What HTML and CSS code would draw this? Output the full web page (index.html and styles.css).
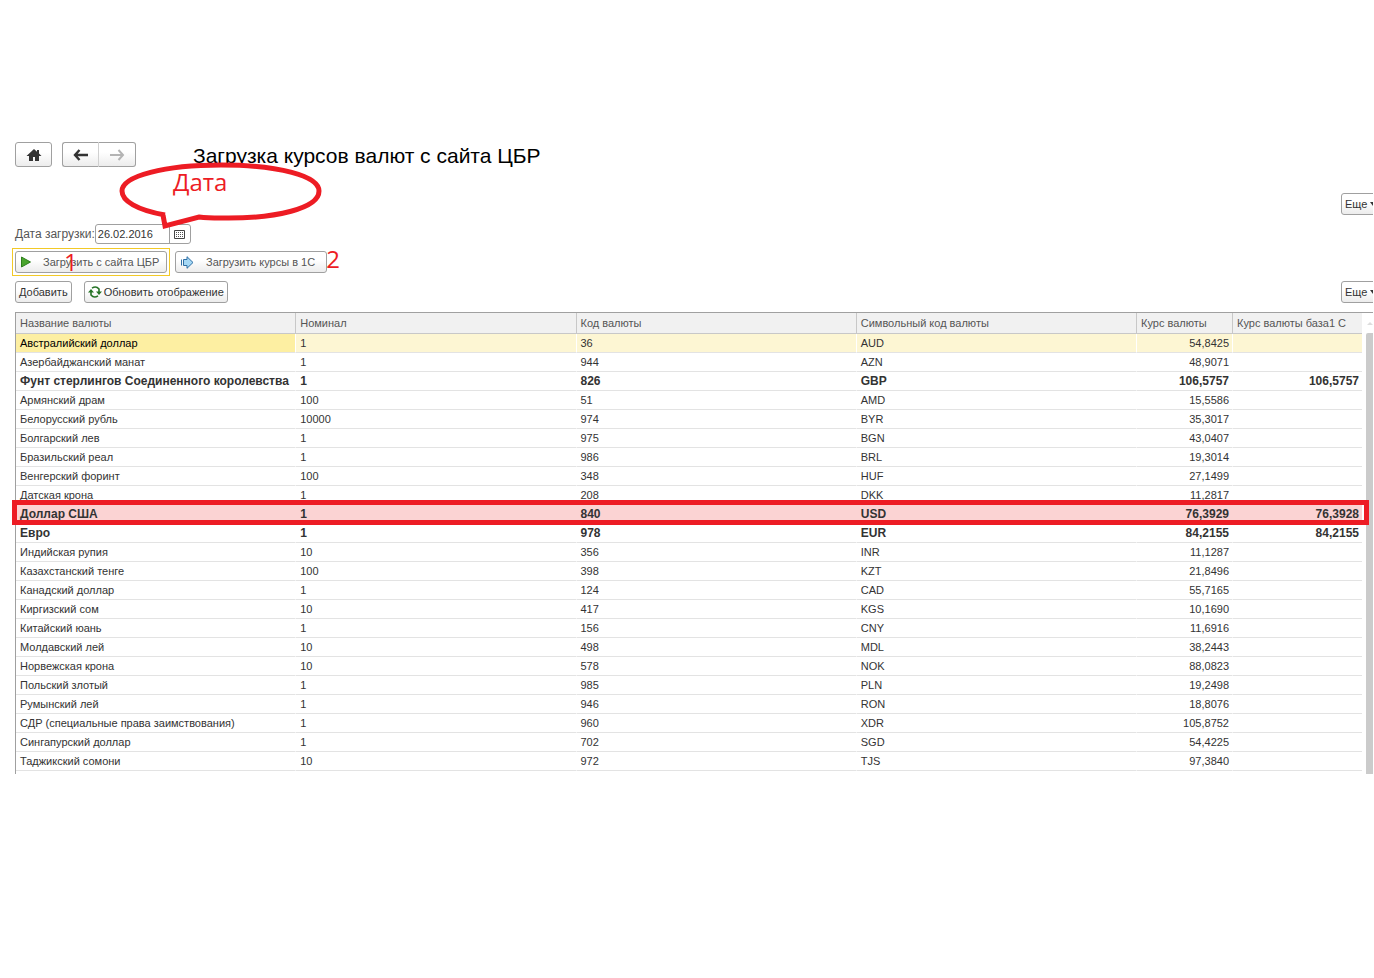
FILE: index.html
```html
<!DOCTYPE html>
<html lang="ru">
<head>
<meta charset="utf-8">
<title>Загрузка курсов валют с сайта ЦБР</title>
<link rel="stylesheet" href="styles.css">
</head>
<body>
<main class="page">
  <header class="topbar">
    <button class="btn btn-home" type="button" aria-label="Домой">
      <svg width="16" height="14" viewBox="0 0 16 14"><path d="M8 1 0.500 8H3v5h4V9h2v4h4V8h2.500L13 5.600V2h-2v1.800z" fill="#333"/></svg>
    </button>
    <div class="nav">
      <button class="btn nav-back" type="button" aria-label="Назад">
        <svg width="16" height="12" viewBox="0 0 16 12"><path d="M6.500 1 2 6l4.500 5M2 6h13" fill="none" stroke="#333" stroke-width="2.400"/></svg>
      </button>
      <button class="btn nav-forward" type="button" aria-label="Вперед" disabled>
        <svg width="16" height="12" viewBox="0 0 16 12"><path d="M9.500 1 14 6l-4.500 5M14 6H1" fill="none" stroke="#b4b4b4" stroke-width="2"/></svg>
      </button>
    </div>
    <h1 class="title">Загрузка курсов валют с сайта ЦБР</h1>
  </header>

  <div class="more-row"><button class="btn btn-more" type="button">Еще <span class="caret"></span></button></div>

  <div class="date-row">
    <label for="date">Дата загрузки:</label>
    <div class="date-field">
      <input id="date" type="text" value="26.02.2016">
      <button class="date-pick" type="button" aria-label="Выбрать дату">
        <svg width="11" height="9" viewBox="0 0 11 9"><path d="M.5.5h10v8H.5z" fill="#fff" stroke="#444"/><path d="M2 2.500h8M2 4.500h8M2 6.500h8" stroke="#555" stroke-dasharray="1 1"/></svg>
      </button>
    </div>
    <svg class="callout" width="204" height="68" viewBox="0 0 204 68"><path d="M46 53C18 48 3 39 3 29C3 14 46 3 102 3C160 3 200 14 200 29C200 46 158 57 102 56Q88 56 80 55L46 64L44 53" fill="none" stroke="#ed1c24" stroke-width="5"/></svg>
    <span class="note note-date">Дата</span>
  </div>

  <div class="load-row">
    <div class="step focus">
      <button class="btn btn-load" type="button">
        <svg width="10" height="12" viewBox="0 0 10 12"><path d="M.5 1 9.500 6 .5 11z" fill="#4aa52e" stroke="#2f7f1e"/></svg>
        <span>Загрузить с сайта ЦБР</span>
      </button>
      <span class="note note-one">1</span>
    </div>
    <div class="step">
      <button class="btn btn-send" type="button">
        <svg width="13" height="13" viewBox="0 0 13 13"><path d="M2.500 3.500H6V.7L12 6.500 6 12.300V9.500H2.500zM.5 3.500v6" fill="#a5d8f5" stroke="#2f6fa5"/></svg>
        <span>Загрузить курсы в 1С</span>
      </button>
      <span class="note note-two">2</span>
    </div>
  </div>

  <div class="tools-row">
    <button class="btn btn-add" type="button">Добавить</button>
    <button class="btn btn-refresh" type="button">
      <svg width="14" height="12" viewBox="0 0 14 12"><path d="M4 2.200Q8-.5 11 3v3M10 9.800Q6 12.500 3 9V6" fill="none" stroke="#267326" stroke-width="1.600"/><path d="M8 5.500h6L11 9zM0 6.500h6L3 3z" fill="#267326"/></svg>
      <span>Обновить отображение</span>
    </button>
    <button class="btn btn-more" type="button">Еще <span class="caret"></span></button>
  </div>

  <div class="grid">
    <table class="rates">
      <colgroup><col><col><col><col><col class="col-rate"><col class="col-base"></colgroup>
      <thead>
        <tr><th>Название валюты</th><th>Номинал</th><th>Код валюты</th><th>Символьный код валюты</th><th>Курс валюты</th><th>Курс валюты база1 С</th></tr>
      </thead>
      <tbody>
        <tr class="selected"><td>Австралийский доллар</td><td>1</td><td>36</td><td>AUD</td><td>54,8425</td><td></td></tr>
        <tr><td>Азербайджанский манат</td><td>1</td><td>944</td><td>AZN</td><td>48,9071</td><td></td></tr>
        <tr class="main"><td>Фунт стерлингов Соединенного королевства</td><td>1</td><td>826</td><td>GBP</td><td>106,5757</td><td>106,5757</td></tr>
        <tr><td>Армянский драм</td><td>100</td><td>51</td><td>AMD</td><td>15,5586</td><td></td></tr>
        <tr><td>Белорусский рубль</td><td>10000</td><td>974</td><td>BYR</td><td>35,3017</td><td></td></tr>
        <tr><td>Болгарский лев</td><td>1</td><td>975</td><td>BGN</td><td>43,0407</td><td></td></tr>
        <tr><td>Бразильский реал</td><td>1</td><td>986</td><td>BRL</td><td>19,3014</td><td></td></tr>
        <tr><td>Венгерский форинт</td><td>100</td><td>348</td><td>HUF</td><td>27,1499</td><td></td></tr>
        <tr><td>Датская крона</td><td>1</td><td>208</td><td>DKK</td><td>11,2817</td><td></td></tr>
        <tr class="main marked"><td>Доллар США</td><td>1</td><td>840</td><td>USD</td><td>76,3929</td><td>76,3928</td></tr>
        <tr class="main"><td>Евро</td><td>1</td><td>978</td><td>EUR</td><td>84,2155</td><td>84,2155</td></tr>
        <tr><td>Индийская рупия</td><td>10</td><td>356</td><td>INR</td><td>11,1287</td><td></td></tr>
        <tr><td>Казахстанский тенге</td><td>100</td><td>398</td><td>KZT</td><td>21,8496</td><td></td></tr>
        <tr><td>Канадский доллар</td><td>1</td><td>124</td><td>CAD</td><td>55,7165</td><td></td></tr>
        <tr><td>Киргизский сом</td><td>10</td><td>417</td><td>KGS</td><td>10,1690</td><td></td></tr>
        <tr><td>Китайский юань</td><td>1</td><td>156</td><td>CNY</td><td>11,6916</td><td></td></tr>
        <tr><td>Молдавский лей</td><td>10</td><td>498</td><td>MDL</td><td>38,2443</td><td></td></tr>
        <tr><td>Норвежская крона</td><td>10</td><td>578</td><td>NOK</td><td>88,0823</td><td></td></tr>
        <tr><td>Польский злотый</td><td>1</td><td>985</td><td>PLN</td><td>19,2498</td><td></td></tr>
        <tr><td>Румынский лей</td><td>1</td><td>946</td><td>RON</td><td>18,8076</td><td></td></tr>
        <tr><td>СДР (специальные права заимствования)</td><td>1</td><td>960</td><td>XDR</td><td>105,8752</td><td></td></tr>
        <tr><td>Сингапурский доллар</td><td>1</td><td>702</td><td>SGD</td><td>54,4225</td><td></td></tr>
        <tr><td>Таджикский сомони</td><td>10</td><td>972</td><td>TJS</td><td>97,3840</td><td></td></tr>
      </tbody>
    </table>
    <div class="scroll"><span class="scroll-up"></span><span class="scroll-thumb"></span></div>
    <div class="marker"></div>
  </div>
</main>
</body>
</html>
```
FILE: styles.css
```css
* { box-sizing: border-box; }
body {
  margin: 0;
  background: #fff;
  color: #333;
  font: 11px/16px "Liberation Sans", Arial, sans-serif;
}
button, input { font: inherit; color: inherit; }
svg { display: block; flex: none; }
.page {
  margin-right: 1px;
  padding: 142px 0 0 15px;
  overflow: hidden;
}
.btn {
  display: flex;
  align-items: center;
  height: 22px;
  padding: 0 3px;
  border: 1px solid #a0a0a0;
  border-radius: 3px;
  background: linear-gradient(#fff 40%, #ececec);
  white-space: nowrap;
}
.topbar { display: flex; height: 25px; }
.topbar .btn { height: 25px; justify-content: center; }
.btn-home { width: 37px; }
.nav { display: flex; margin-left: 10px; }
.nav .btn { width: 37px; }
.nav .nav-back { border-radius: 3px 0 0 3px; border-right-color: #d0d0d0; }
.nav .nav-forward { border-left: 0; border-radius: 0 3px 3px 0; }
.title {
  margin: 0 0 0 57px;
  color: #000;
  font-size: 21px;
  font-weight: 400;
  line-height: 28px;
}
.more-row { display: flex; margin-top: 26px; }
.btn-more {
  width: 44px;
  margin: 0 -12px 0 auto;
  gap: 3px;
}
.caret {
  border: 3px solid transparent;
  border-top: 4px solid #333;
  border-bottom: 0;
}
.date-row {
  position: relative;
  display: flex;
  align-items: center;
  margin-top: 9px;
}
.date-row label { color: #555; font-size: 12px; }
.date-field {
  display: flex;
  width: 96px;
  height: 20px;
  border: 1px solid #a0a0a0;
  border-radius: 3px;
}
.date-field input {
  flex: 1;
  min-width: 0;
  padding: 0 2px;
  border: 0;
  background: none;
}
.date-pick {
  display: flex;
  align-items: center;
  justify-content: center;
  width: 21px;
  padding: 0;
  border: 0;
  border-left: 1px solid #a0a0a0;
  background: none;
}
.callout { position: absolute; left: 104px; top: -62px; }
.note {
  position: absolute;
  color: #ed1c24;
  font: 24px/28px "Open Sans", "Noto Sans", sans-serif;
}
.note-date { left: 158px; top: -56px; }
.note-one { left: 51px; top: -1px; }
.note-two { right: -13px; top: -6px; }
.load-row { display: flex; align-items: center; gap: 5px; margin: 4px 0 0 -3px; }
.step { position: relative; }
.focus { padding: 2px; border: 1px solid #f2c927; }
.load-row .btn { padding: 0 5px; color: #555; }
.btn-load { width: 152px; gap: 12px; }
.btn-send { width: 152px; gap: 12px; }
.tools-row { display: flex; gap: 12px; margin-top: 5px; }
.btn-refresh { gap: 2px; }
.grid {
  position: relative;
  display: flex;
  gap: 4px;
  margin-top: 9px;
  padding-bottom: 3px;
  border-top: 1px solid #a0a0a0;
  border-left: 1px solid #a0a0a0;
}
.rates {
  flex: 1 1 0;
  width: 100%;
  min-width: 0;
  table-layout: fixed;
  border-collapse: separate;
  border-spacing: 0;
}
.col-rate { width: 96px; }
.col-base { width: 129px; }
th, td {
  overflow: hidden;
  padding: 0 4px;
  white-space: nowrap;
  text-align: left;
}
th {
  height: 21px;
  border-right: 1px solid #c8c8c8;
  border-bottom: 1px solid #c8c8c8;
  background: #f1f1f1;
  color: #555;
  font-weight: 400;
}
th:last-child { border-right: 0; }
td { height: 19px; border-bottom: 1px solid #e3e3e3; border-right: 1px solid transparent; }
td:nth-child(n+5) { padding-right: 3px; text-align: right; }
td:last-child { border-right: 0; }
.selected td { background: #fdf6d3; background-clip: padding-box; }
.selected td:first-child { background-color: #fdefa2; color: #000; }
.main { font-size: 12px; font-weight: 700; }
.marked td { background: #fbd3d3; }
.scroll {
  display: flex;
  flex-direction: column;
  align-items: center;
  width: 7px;
  margin-bottom: -3px;
}
.scroll-up { margin: 9px 0 8px; border: 3px solid transparent; border-top: 0; border-bottom: 3px solid #ddd; }
.scroll-thumb { flex: 1; width: 7px; background: #cbcbcb; border-radius: 2px 0 0 0; }
.marker {
  position: absolute;
  left: -4px;
  right: 4px;
  top: 187px;
  height: 25px;
  border: 5px solid #ed1c24;
}
```
